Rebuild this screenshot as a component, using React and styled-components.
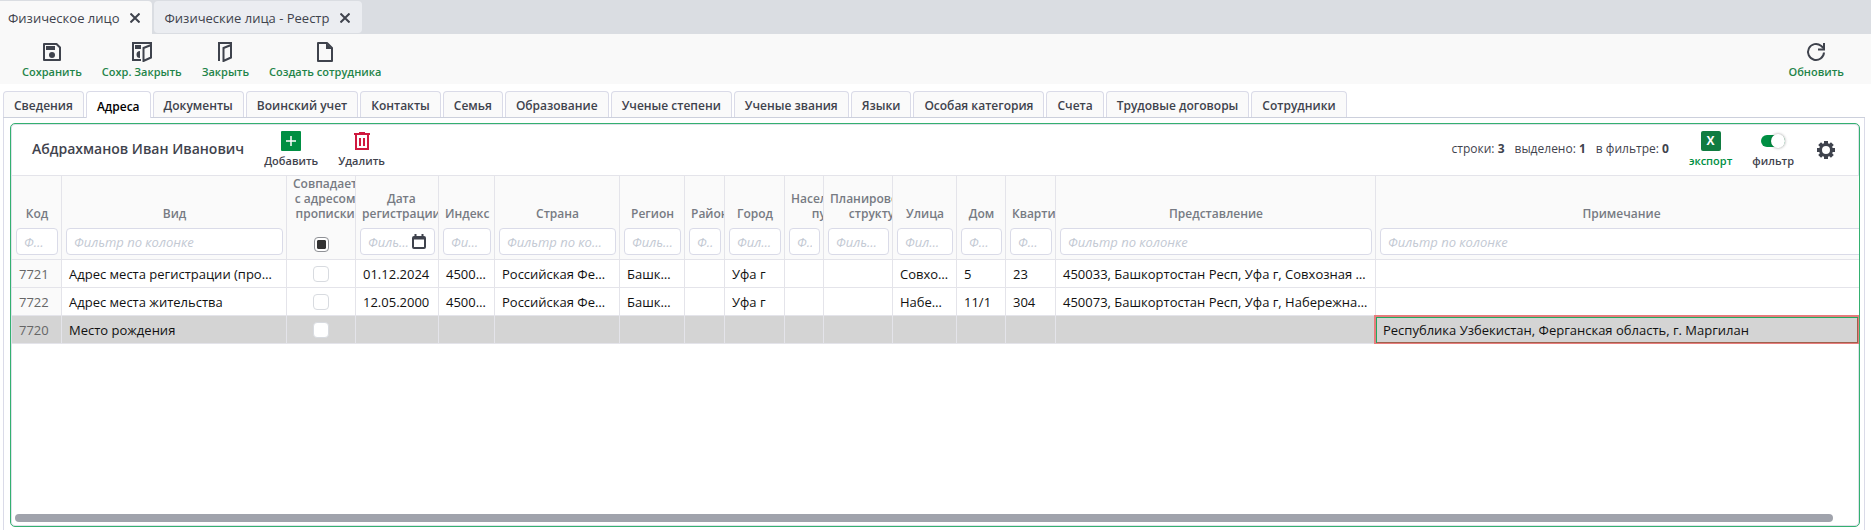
import React from "react";
import styled, { createGlobalStyle, css } from "styled-components";

const GlobalStyle = createGlobalStyle`
  *, *::before, *::after { box-sizing: border-box; }
  html, body, #root { height: 100%; }
  body {
    margin: 0;
    background: #fff;
    color: #3f434d;
    font: 400 12px/16px "Open Sans", "Noto Sans", sans-serif;
  }
  button, input { font: inherit; color: inherit; }
  button { padding: 0; border: 0; background: none; cursor: pointer; }
  svg { display: block; }
`;

const Page = styled.div`
  display: flex;
  flex-direction: column;
  height: 100vh;
  overflow: hidden;
`;

const WindowBar = styled.div`
  display: flex;
  gap: 2px;
  height: 34px;
  padding-top: 1px;
  background: #dadde2;
`;

const WindowTab = styled.div`
  display: flex;
  align-items: center;
  gap: 11px;
  height: ${(p) => (p.$active ? 33 : 32)}px;
  padding: 1px 12px 0 ${(p) => (p.$active ? 8 : 10)}px;
  border-radius: ${(p) => (p.$active ? "0 4px 0 0" : "4px")};
  background: ${(p) => (p.$active ? "#f9f9f9" : "#ebedf1")};
`;

const WindowTitle = styled.button`
  font-size: 13px;
  line-height: 20px;
  white-space: nowrap;
`;

const Toolbar = styled.div`
  display: flex;
  align-items: flex-start;
  gap: 20px;
  height: 50px;
  padding: 8px 27px 0 22px;
  background: #f9f9f9;
`;

const ToolButton = styled.button`
  display: flex;
  flex-direction: column;
  align-items: center;
  gap: 2px;
  color: ${(p) => (p.$plain ? "#3f434d" : p.$bright ? "#008f43" : "#1f8449")};
  font-size: 11px;
  font-weight: 600;
  white-space: nowrap;
  svg { color: #3f434d; }
`;

const Spacer = styled.div`
  flex: 1;
`;

const Content = styled.main`
  flex: 1;
  display: flex;
  flex-direction: column;
  min-height: 0;
  margin: 7px 6px 0 3px;
`;

const TabStrip = styled.div`
  display: flex;
  gap: 2px;
  height: 27px;
  border-bottom: 1px solid #ccd0dc;
`;

const SectionTab = styled.button`
  height: ${(p) => (p.$active ? 27 : 26)}px;
  padding: ${(p) => (p.$active ? 4 : 2)}px 10px 0;
  border: 1px solid #dadbe8;
  border-bottom: 0;
  border-radius: 4px 4px 0 0;
  background: ${(p) => (p.$active ? "#fff" : "#fafafa")};
  color: ${(p) => (p.$active ? "#000" : "#3f434d")};
  font-weight: 600;
  white-space: nowrap;
`;

const TabBody = styled.div`
  flex: 1;
  display: flex;
  min-height: 0;
  padding: 5px 4px 3px 6px;
  border: solid #dadbe8;
  border-width: 0 1px;
`;

const Panel = styled.section`
  flex: 1;
  display: flex;
  flex-direction: column;
  min-width: 0;
  border: 1px solid #34b070;
  border-radius: 5px;
  box-shadow: inset 0 0 0 1px #dfe1ea;
  padding: 1px 0 1px 1px;
`;

const PanelHeader = styled.header`
  display: flex;
  align-items: center;
  height: 51px;
  padding: 0 24px 0 20px;
  border-bottom: 1px solid #e4e4ea;
`;

const PanelTitle = styled.h1`
  margin: 0;
  padding-bottom: 2px;
  font-size: 14px;
  font-weight: 600;
  line-height: 24px;
  white-space: nowrap;
`;

const Actions = styled.div`
  display: flex;
  align-items: center;
  gap: 20px;
  margin-left: 20px;
`;

const SettingsButton = styled.button`
  margin-left: 23px;
`;

const Counters = styled.div`
  display: flex;
  gap: 10px;
  padding-bottom: 2px;
  white-space: nowrap;
  b { font-weight: 700; }
`;

const ExcelBadge = styled.span`
  width: 20px;
  height: 20px;
  border-radius: 2px;
  background: #107c41;
  color: #fff;
  font-size: 12px;
  font-weight: 700;
  line-height: 20px;
  text-align: center;
`;

const SwitchLabel = styled.label`
  display: flex;
  flex-direction: column;
  align-items: center;
  gap: 2px;
  font-size: 11px;
  font-weight: 600;
`;

const Switch = styled.input`
  appearance: none;
  display: flex;
  align-items: center;
  justify-content: flex-end;
  width: 24px;
  height: 12px;
  margin: 4px 0;
  border-radius: 6px;
  background: #008f43;
  &::after {
    content: "";
    width: 14px;
    height: 14px;
    flex: none;
    border-radius: 50%;
    background: #fff;
    box-shadow: 0 0 3px rgba(0, 0, 0, 0.4);
  }
`;

const GridViewport = styled.div`
  flex: 1;
  min-height: 0;
  overflow: hidden;
`;

const Grid = styled.table`
  width: calc(100% + 8px);
  table-layout: fixed;
  border-collapse: separate;
  border-spacing: 0;
`;

const HeadCell = styled.th`
  height: 84px;
  padding: 0 3px 4px 4px;
  border: solid #e4e4ea;
  border-width: 0 1px 1px 0;
  background: #fafafa;
  color: #777b83;
  font-weight: 600;
  line-height: 15px;
  vertical-align: bottom;
  overflow: hidden;
`;

const HeadText = styled.div`
  width: max-content;
  min-width: 100%;
  padding: 0 2px;
  margin-bottom: 7px;
  text-align: center;
  white-space: pre;
`;

const FilterBox = styled.div`
  display: flex;
  align-items: center;
  height: 27px;
  padding: 1px 7px 0;
  border: 1px solid #dadbe8;
  border-radius: 4px;
  background: #fff;
`;

const FilterInput = styled.input`
  flex: 1;
  min-width: 0;
  padding: 0;
  border: 0;
  outline: 0;
  background: none;
  font-size: 13px;
  font-weight: 400;
  text-overflow: ellipsis;
  &::placeholder {
    color: #c3c9d3;
    font-style: italic;
  }
`;

const CheckSlot = styled.div`
  display: flex;
  align-items: flex-end;
  justify-content: center;
  height: 27px;
  padding: 0 1px 3px 0;
`;

const Check = styled.input`
  appearance: none;
  display: block;
  width: 16px;
  height: 16px;
  margin: 0 auto;
  border: 1px solid #d8dbe0;
  border-radius: 4px;
  background: #fff;
  ${(p) =>
    p.$mixed &&
    css`
      width: 15px;
      height: 15px;
      padding: 2px;
      border-color: #8f9196;
      background: #333 content-box;
      box-shadow: inset 0 0 0 2px #fff;
    `}
`;

const Row = styled.tr`
  background: ${(p) => (p.$selected ? "#d4d4d4" : "#fff")};
`;

const Cell = styled.td`
  height: 28px;
  padding: 0 7px;
  border: solid #e4e4ea;
  border-width: 0 1px 1px 0;
  background: ${(p) => (p.$code ? "#fafafa" : "transparent")};
  color: ${(p) => (p.$code ? "#666" : "#111")};
  font-size: 13px;
  line-height: 20px;
  white-space: nowrap;
  overflow: hidden;
  text-overflow: ellipsis;
  ${Row}[aria-selected="true"] & {
    background: transparent;
  }
`;

const FocusCell = styled(Cell)`
  position: relative;
  overflow: visible;
`;

const FocusFrame = styled.span`
  position: absolute;
  inset: -1px 7px -1px -2px;
  border: solid #e67c7c;
  border-width: 2px 1px 1px 2px;
  box-shadow: inset 1px 1px #20a860, inset -1px -1px #a0604c;
`;

const ScrollTrack = styled.div`
  flex: none;
  padding: 0 26px 3px 3px;
`;

const ScrollThumb = styled.div`
  height: 8px;
  border-radius: 4px;
  background: #a0a3ac;
`;

const CloseIcon = () => (
  <svg width="10" height="10" viewBox="0 0 10 10" fill="none" stroke="#3f434d" strokeWidth="2">
    <path d="M0.500 0.500l9 9M9.500 0.500l-9 9" />
  </svg>
);

const SaveIcon = () => (
  <svg width="20" height="20" viewBox="0 0 20 20" fill="none" stroke="currentColor" strokeWidth="2">
    <path d="M2 2h12.500L18 5.500V18H2z" strokeLinejoin="round" />
    <path d="M4 4h9v4H4z" fill="currentColor" stroke="none" />
    <circle cx="10" cy="13" r="3" fill="currentColor" stroke="none" />
  </svg>
);

const SaveCloseIcon = () => (
  <svg width="20" height="20" viewBox="0 0 20 20" fill="none" stroke="currentColor" strokeWidth="2">
    <path d="M9 18H1V1h18v14.500L11.500 19V6L19 3" />
    <path d="M3 3h6v4H3zM8 9v7a3.500 3.500 0 0 1 0-7z" fill="currentColor" stroke="none" />
  </svg>
);

const DoorIcon = () => (
  <svg width="14" height="20" viewBox="0 0 14 20" fill="none" stroke="currentColor" strokeWidth="2">
    <path d="M1 19V1h12v14.500L5.500 19V6L13 3" />
  </svg>
);

const FileIcon = () => (
  <svg width="18" height="20" viewBox="0 0 18 20" fill="none" stroke="currentColor" strokeWidth="2">
    <path d="M2 1h9l5 5v13H2z" strokeLinejoin="round" />
    <path d="M10 1v6h6z" fill="currentColor" stroke="none" />
  </svg>
);

const RefreshIcon = () => (
  <svg width="20" height="20" viewBox="0 0 20 20" fill="none" stroke="currentColor" strokeWidth="2">
    <path d="M18 10.500a8 8 0 1 1-3-6.800L18 6.500" />
    <path d="M18 1v6.500h-6" />
  </svg>
);

const PlusIcon = () => (
  <svg width="20" height="20" viewBox="0 0 20 20">
    <rect width="20" height="20" rx="1" fill="#008f43" />
    <path d="M10 5v10M5 10h10" stroke="#fff" strokeWidth="1.500" />
  </svg>
);

const TrashIcon = () => (
  <svg width="16" height="20" viewBox="0 0 16 20" fill="none" stroke="#d0193f" strokeWidth="2">
    <path d="M0 3h16M5 2h6" />
    <path d="M2 3v15h12V3M6 7v8M10 7v8" />
  </svg>
);

const CalendarIcon = () => (
  <svg width="15" height="16" viewBox="0 0 15 16" fill="none" stroke="#3f434d" strokeWidth="2">
    <rect x="1" y="3" width="12" height="11" rx="1" />
    <path d="M1 4.500h12M3.500 0v3M10.500 0v3" />
  </svg>
);

const GearIcon = () => (
  <svg width="18" height="18" viewBox="0 0 18 18" fill="none" stroke="#3f434d">
    <circle cx="9" cy="9" r="5.500" strokeWidth="3" />
    {[0, 45, 90, 135].map((a) => (
      <path key={a} d="M9 0v3M9 15v3" strokeWidth="4" transform={`rotate(${a} 9 9)`} />
    ))}
  </svg>
);

const sections = [
  "Сведения", "Адреса", "Документы", "Воинский учет", "Контакты", "Семья", "Образование",
  "Ученые степени", "Ученые звания", "Языки", "Особая категория", "Счета",
  "Трудовые договоры", "Сотрудники",
];

const columns = [
  { title: "Код", width: 50 },
  { title: "Вид", width: 225 },
  { title: "Совпадает\nс адресом\nпрописки", width: 69, kind: "check" },
  { title: "Дата\nрегистрации", width: 83, kind: "date" },
  { title: "Индекс", width: 56 },
  { title: "Страна", width: 125 },
  { title: "Регион", width: 65 },
  { title: "Район", width: 40 },
  { title: "Город", width: 60 },
  { title: "Населенный\nпункт", width: 39 },
  { title: "Планировочная\nструктура", width: 69 },
  { title: "Улица", width: 64 },
  { title: "Дом", width: 49 },
  { title: "Квартира", width: 50 },
  { title: "Представление", width: 320 },
  { title: "Примечание" },
];

const rows = [
  ["7721", "Адрес места регистрации (прописки)", false, "01.12.2024", "450033", "Российская Федерация", "Башкортостан Респ", "", "Уфа г", "", "", "Совхозная ул", "5", "23", "450033, Башкортостан Респ, Уфа г, Совхозная ул, д. 5", ""],
  ["7722", "Адрес места жительства", false, "12.05.2000", "450073", "Российская Федерация", "Башкортостан Респ", "", "Уфа г", "", "", "Набережная ул", "11/1", "304", "450073, Башкортостан Респ, Уфа г, Набережная ул, д. 11/1", ""],
  ["7720", "Место рождения", false, "", "", "", "", "", "", "", "", "", "", "", "", "Республика Узбекистан, Ферганская область, г. Маргилан"],
];

const ColumnFilter = ({ column }) => {
  if (column.kind === "check") {
    return (
      <CheckSlot>
        <Check type="checkbox" $mixed aria-label={column.title} />
      </CheckSlot>
    );
  }
  return (
    <FilterBox>
      <FilterInput type="text" placeholder="Фильтр по колонке" aria-label={column.title} />
      {column.kind === "date" && <CalendarIcon />}
    </FilterBox>
  );
};

const DataRow = ({ row, selected }) => (
  <Row $selected={selected} aria-selected={selected}>
    {row.map((value, i) => {
      if (typeof value === "boolean") {
        return (
          <Cell key={i}>
            <Check type="checkbox" aria-label={row[1]} />
          </Cell>
        );
      }
      if (selected && i === row.length - 1) {
        return (
          <FocusCell key={i}>
            {value}
            <FocusFrame />
          </FocusCell>
        );
      }
      return <Cell key={i} $code={i === 0}>{value}</Cell>;
    })}
  </Row>
);

export default function App() {
  return (
    <Page>
      <GlobalStyle />
      <WindowBar>
        <WindowTab $active>
          <WindowTitle>Физическое лицо</WindowTitle>
          <button aria-label="Закрыть вкладку"><CloseIcon /></button>
        </WindowTab>
        <WindowTab>
          <WindowTitle>Физические лица - Реестр</WindowTitle>
          <button aria-label="Закрыть вкладку"><CloseIcon /></button>
        </WindowTab>
      </WindowBar>
      <Toolbar>
        <ToolButton><SaveIcon />Сохранить</ToolButton>
        <ToolButton><SaveCloseIcon />Сохр. Закрыть</ToolButton>
        <ToolButton><DoorIcon />Закрыть</ToolButton>
        <ToolButton><FileIcon />Создать сотрудника</ToolButton>
        <Spacer />
        <ToolButton><RefreshIcon />Обновить</ToolButton>
      </Toolbar>
      <Content>
        <TabStrip role="tablist">
          {sections.map((name) => (
            <SectionTab key={name} role="tab" $active={name === "Адреса"}>{name}</SectionTab>
          ))}
        </TabStrip>
        <TabBody>
          <Panel>
            <PanelHeader>
              <PanelTitle>Абдрахманов Иван Иванович</PanelTitle>
              <Actions>
                <ToolButton $plain><PlusIcon />Добавить</ToolButton>
                <ToolButton $plain><TrashIcon />Удалить</ToolButton>
              </Actions>
              <Spacer />
              <Counters>
                <span>строки: <b>3</b></span>
                <span>выделено: <b>1</b></span>
                <span>в фильтре: <b>0</b></span>
              </Counters>
              <Actions>
                <ToolButton $bright><ExcelBadge>X</ExcelBadge>экспорт</ToolButton>
                <SwitchLabel>
                  <Switch type="checkbox" role="switch" defaultChecked />
                  фильтр
                </SwitchLabel>
              </Actions>
              <SettingsButton aria-label="Настройки"><GearIcon /></SettingsButton>
            </PanelHeader>
            <GridViewport>
              <Grid>
                <colgroup>
                  {columns.map((c) => <col key={c.title} width={c.width} />)}
                </colgroup>
                <thead>
                  <tr>
                    {columns.map((c) => (
                      <HeadCell key={c.title} scope="col">
                        <HeadText>{c.title}</HeadText>
                        <ColumnFilter column={c} />
                      </HeadCell>
                    ))}
                  </tr>
                </thead>
                <tbody>
                  {rows.map((row) => <DataRow key={row[0]} row={row} selected={row[0] === "7720"} />)}
                </tbody>
              </Grid>
            </GridViewport>
            <ScrollTrack><ScrollThumb /></ScrollTrack>
          </Panel>
        </TabBody>
      </Content>
    </Page>
  );
}
